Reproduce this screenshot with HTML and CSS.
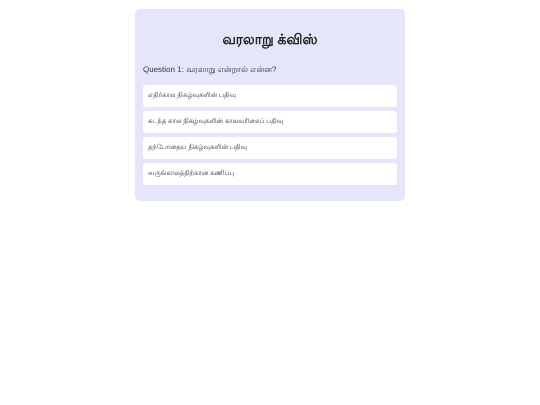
FILE: index.html
```html
<!DOCTYPE html>
<html lang="ta">
<head>
<meta charset="utf-8">
<link rel="stylesheet" href="styles.css">
</head>
<body>
<div class="quiz">
  <h1 class="title">வரலாறு க்விஸ்</h1>
  <p class="question">Question 1: வரலாறு என்றால் என்ன?</p>
  <div class="options">
    <div class="option">எதிர்கால நிகழ்வுகளின் பதிவு</div>
    <div class="option">கடந்த கால நிகழ்வுகளின் காலவரிசைப் பதிவு</div>
    <div class="option">தற்போதைய நிகழ்வுகளின் பதிவு</div>
    <div class="option">வருங்காலத்திற்கான கணிப்பு</div>
  </div>
</div>
</body>
</html>
```
FILE: styles.css
```css
html, body {
  margin: 0;
  padding: 0;
  background: #ffffff;
}
body {
  font-family: "Liberation Sans", Arial, sans-serif;
  color: #333333;
  padding-top: 9px;
  -webkit-font-smoothing: antialiased;
  text-rendering: geometricPrecision;
}
.quiz {
  width: 254px;
  margin: 0 auto;
  background: #e6e6fa;
  border-radius: 5px;
  padding: 21px 8px 16px;
}
.title {
  margin: 0;
  text-align: center;
  font-size: 14px;
  font-weight: bold;
  line-height: 18px;
  color: #222222;
  will-change: transform;
}
.question {
  margin: 16px 0 9px;
  font-size: 8px;
  line-height: 12px;
  color: #333333;
  will-change: transform;
}
.options {
  display: flex;
  flex-direction: column;
  gap: 4px;
  will-change: transform;
}
.option {
  background: #ffffff;
  border-radius: 3px;
  height: 22px;
  padding: 0 5px;
  display: flex;
  align-items: center;
  font-size: 6.7px;
  color: #333333;
}
```
